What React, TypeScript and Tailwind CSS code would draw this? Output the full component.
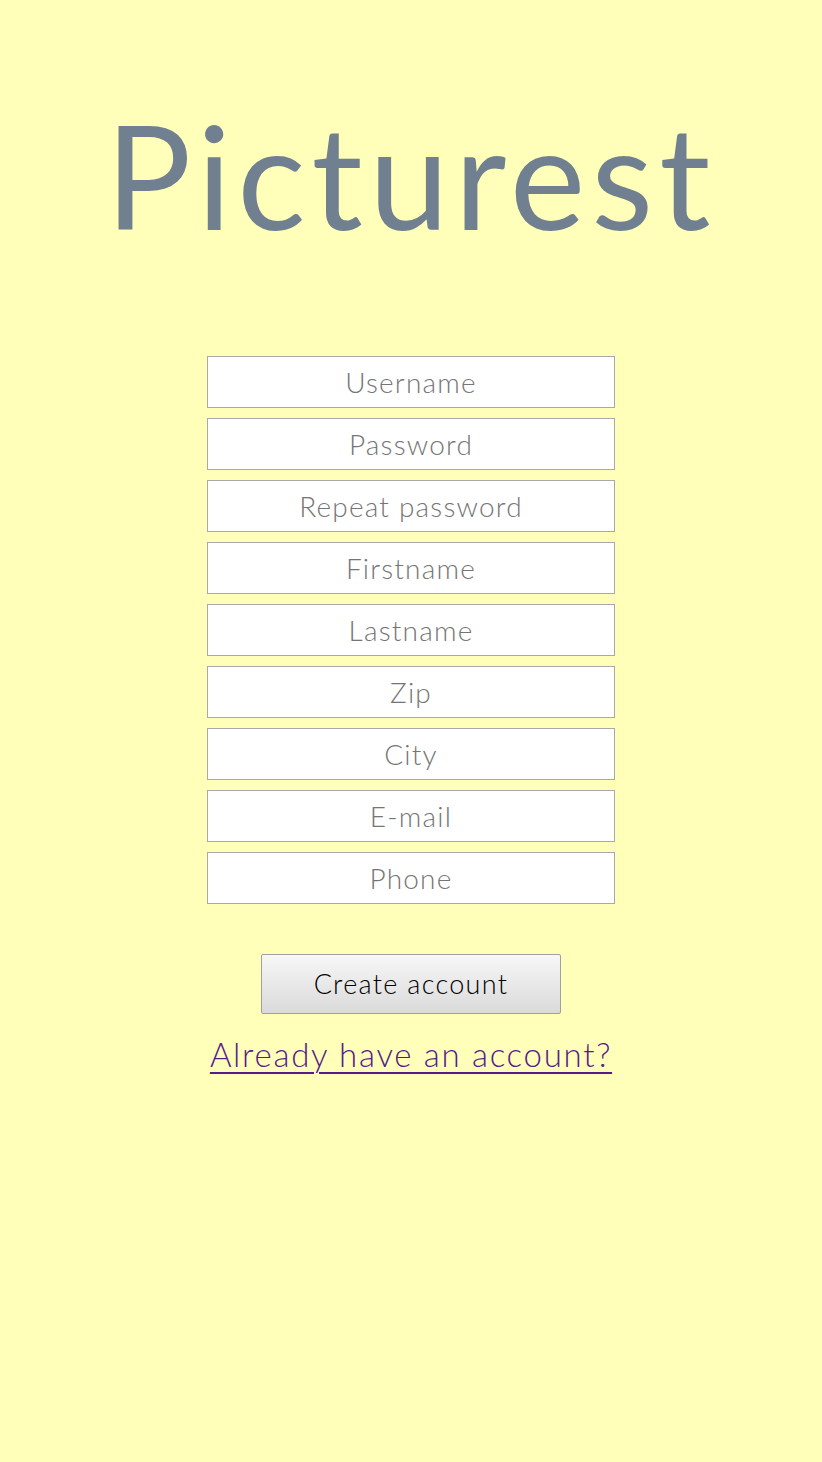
import React from "react";

const fields = [
  "Username",
  "Password",
  "Repeat password",
  "Firstname",
  "Lastname",
  "Zip",
  "City",
  "E-mail",
  "Phone",
];

export default function App() {
  return (
    <div className="min-h-[1462px] w-full bg-[#ffffb9] flex flex-col items-center font-['Lato','Noto_Sans',sans-serif]">
      <header className="h-[356px] pt-[103px]">
        <h1 className="text-[143px] leading-none font-normal text-[#708090] tracking-[6px]">
          Picturest
        </h1>
      </header>

      <form className="flex flex-col items-center" onSubmit={(e) => e.preventDefault()}>
        <div className="flex flex-col gap-[10px]">
          {fields.map((f) => (
            <input
              key={f}
              type={f.toLowerCase().includes("password") ? "password" : "text"}
              placeholder={f}
              className="w-[408px] h-[52px] bg-white border border-[#a9a9a9] text-center text-[28px] font-light tracking-[1.2px] text-[#555] placeholder:text-[#757575] outline-none"
            />
          ))}
        </div>

        <button
          type="submit"
          className="mt-[50px] w-[300px] h-[60px] border border-[#a0a0a0] rounded-[2px] bg-gradient-to-b from-[#f7f7f7] to-[#dadada] text-[27px] font-light tracking-[1.3px] text-black"
        >
          Create account
        </button>

        <a href="#" className="mt-[16px] text-[33px] font-light tracking-[1.7px] text-[#551a8b] underline underline-offset-[5px] decoration-[2px]">
          Already have an account?
        </a>
      </form>
    </div>
  );
}
